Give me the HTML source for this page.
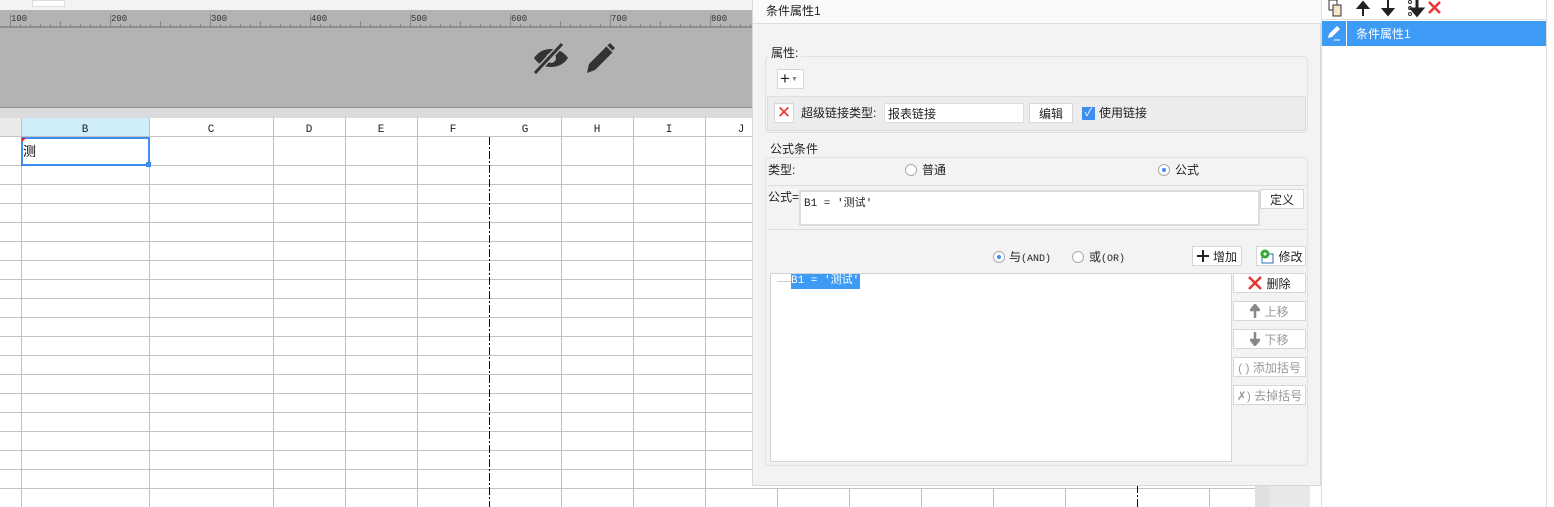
<!DOCTYPE html>
<html><head><meta charset="utf-8"><style>
*{margin:0;padding:0;box-sizing:border-box}
body{width:1554px;height:507px;position:relative;overflow:hidden;background:#fff;font-family:"Liberation Sans","Noto Sans CJK SC",sans-serif;font-size:12px;color:#222}
.a{position:absolute}
.btn{position:absolute;background:#fff;border:1px solid #d6d6d6;font-size:12px;display:flex;align-items:center;justify-content:center;gap:4px}
.dis{color:#999}
.radio{position:absolute;width:12px;height:12px;border:1px solid #aaa;border-radius:50%;background:#fff}
.radio.on::after{content:"";position:absolute;left:3px;top:3px;width:4px;height:4px;border-radius:50%;background:#3d8ef0}
</style></head><body>
<!-- toolbar -->
<div class="a" style="left:0;top:0;width:752px;height:10px;background:#f3f3f3"></div>
<div class="a" style="left:32px;top:0;width:33px;height:7px;background:#fff;border:1px solid #ddd"></div>
<!-- ruler -->
<div class="a" style="left:0;top:10px;width:752px;height:18px;background:#b3b3b3;border-bottom:2px solid #8e8e8e"></div>
<svg class="a" style="left:0;top:10px" width="752" height="18">
<g stroke="#888" stroke-width="1">
<path d="M10.5 4v14M110.5 4v14M210.5 4v14M310.5 4v14M410.5 4v14M510.5 4v14M610.5 4v14M710.5 4v14"/>
<path d="M20.5 14v4M30.5 14v4M40.5 14v4M50.5 14v4M60.5 11v7M70.5 14v4M80.5 14v4M90.5 14v4M100.5 14v4M120.5 14v4M130.5 14v4M140.5 14v4M150.5 14v4M160.5 11v7M170.5 14v4M180.5 14v4M190.5 14v4M200.5 14v4M220.5 14v4M230.5 14v4M240.5 14v4M250.5 14v4M260.5 11v7M270.5 14v4M280.5 14v4M290.5 14v4M300.5 14v4M320.5 14v4M330.5 14v4M340.5 14v4M350.5 14v4M360.5 11v7M370.5 14v4M380.5 14v4M390.5 14v4M400.5 14v4M420.5 14v4M430.5 14v4M440.5 14v4M450.5 14v4M460.5 11v7M470.5 14v4M480.5 14v4M490.5 14v4M500.5 14v4M520.5 14v4M530.5 14v4M540.5 14v4M550.5 14v4M560.5 11v7M570.5 14v4M580.5 14v4M590.5 14v4M600.5 14v4M620.5 14v4M630.5 14v4M640.5 14v4M650.5 14v4M660.5 11v7M670.5 14v4M680.5 14v4M690.5 14v4M700.5 14v4M720.5 14v4M730.5 14v4M740.5 14v4M750.5 14v4"/></g>
<g font-family="Liberation Mono" font-size="9" fill="#333"><text x="11" y="11">100</text><text x="111" y="11">200</text><text x="211" y="11">300</text><text x="311" y="11">400</text><text x="411" y="11">500</text><text x="511" y="11">600</text><text x="611" y="11">700</text><text x="711" y="11">800</text></g></svg>
<!-- gray area -->
<div class="a" style="left:0;top:28px;width:752px;height:80px;background:#b3b3b3;border-bottom:1px solid #8e8e8e"></div>
<svg class="a" style="left:530px;top:40px" width="90" height="38">
<path d="M4 18c4-6 10-9 17-9s13 3 17 9c-4 6-10 9-17 9S8 24 4 18z" fill="#333"/>
<circle cx="21" cy="18" r="5" fill="#b3b3b3"/>
<path d="M5 33L32 4" stroke="#b3b3b3" stroke-width="6"/>
<path d="M5 33L32 4" stroke="#333" stroke-width="3"/>
<path d="M57 33l2-9 18-18 6 6-18 18z" fill="#333"/>
<path d="M75 8l5-5 5 5-5 5z" fill="#333"/>
<path d="M77 6l6 6" stroke="#b3b3b3" stroke-width="1.5"/>
</svg>
<div class="a" style="left:0;top:108px;width:752px;height:10px;background:#dcdcde"></div>
<!-- grid -->
<svg class="a" style="left:0;top:118px" width="1270" height="389">
<rect x="0" y="0" width="21" height="19" fill="#eaeaea"/>
<rect x="21" y="0" width="128" height="19" fill="#cfeefa"/>
<g stroke="#c2c2c2" stroke-width="1">
<path d="M0 18.5H752M0 47.5H752M0 66.5H752M0 85.5H752M0 104.5H752M0 123.5H752M0 142.5H752M0 161.5H752M0 180.5H752M0 199.5H752M0 218.5H752M0 237.5H752M0 256.5H752M0 275.5H752M0 294.5H752M0 313.5H752M0 332.5H752M0 351.5H752M0 370.5H1255"/>
<path d="M21.5 0v389M149.5 0v389M273.5 0v389M345.5 0v389M417.5 0v389M561.5 0v389M633.5 0v389M705.5 0v389M777.5 370v19M849.5 370v19M921.5 370v19M993.5 370v19M1065.5 370v19M1209.5 370v19"/>
</g>
<path d="M489.5 19v370M1137.5 367v22" stroke="#000" stroke-dasharray="8 2 2 2"/>
<g font-family="Liberation Mono" font-size="11" fill="#222" text-anchor="middle"><text x="85" y="14">B</text><text x="211" y="14">C</text><text x="309" y="14">D</text><text x="381" y="14">E</text><text x="453" y="14">F</text><text x="525" y="14">G</text><text x="597" y="14">H</text><text x="669" y="14">I</text><text x="741" y="14">J</text></g>
<rect x="22" y="20" width="127" height="27" fill="none" stroke="#3d8ef0" stroke-width="2"/>
<rect x="146" y="44" width="5" height="5" fill="#3d8ef0"/>
<path d="M22 20h4l-4 4z" fill="#e22"/>
<text x="23" y="38" font-size="13" font-family="Noto Sans CJK SC">测</text>
<rect x="1255" y="367" width="15" height="22" fill="#e0e0e0"/>
</svg>
<div class="a" style="left:1270px;top:485px;width:40px;height:22px;background:#e8e8e8"></div>
<!-- dialog -->
<div class="a" style="left:752px;top:0;width:569px;height:486px;background:#f3f3f5;border:1px solid #d8d8d8;border-top:none"></div>
<div class="a" style="left:753px;top:0;width:568px;height:24px;background:#fafafa;border-bottom:1px solid #ddd;padding:2px 0 0 13px;font-size:12px">条件属性1</div>
<div class="a" style="left:765px;top:56px;width:543px;height:77px;border:1px solid #e2e2e4;border-radius:4px"></div>
<div class="a" style="left:768px;top:44px;background:#f3f3f5;padding:0 3px;font-size:12px">属性:</div>
<div class="btn" style="left:777px;top:69px;width:27px;height:20px;font-size:17px;justify-content:flex-start;padding-left:2px">+<span style="font-size:7px;color:#888;margin-left:-3px">▼</span></div>
<div class="a" style="left:767px;top:96px;width:539px;height:35px;background:#ececee;border:1px solid #ddd"></div>
<div class="btn" style="left:774px;top:103px;width:20px;height:20px;color:#e33;font-size:17px">✕</div>
<div class="a" style="left:801px;top:104px;font-size:12px">超级链接类型:</div>
<div class="a" style="left:884px;top:103px;width:140px;height:20px;background:#fff;border:1px solid #ddd;padding:1px 3px">报表链接</div>
<div class="btn" style="left:1029px;top:103px;width:44px;height:20px">编辑</div>
<div class="a" style="left:1082px;top:107px;width:13px;height:13px;background:#3d8ef0;color:#fff;font-size:11px;line-height:13px;text-align:center">✓</div>
<div class="a" style="left:1099px;top:104px">使用链接</div>
<div class="a" style="left:765px;top:157px;width:543px;height:309px;border:1px solid #e2e2e4;border-radius:4px"></div>
<div class="a" style="left:768px;top:140px;background:#f3f3f5;padding:0 2px">公式条件</div>
<div class="a" style="left:768px;top:161px">类型:</div>
<div class="radio" style="left:905px;top:164px"></div><div class="a" style="left:922px;top:161px">普通</div>
<div class="radio on" style="left:1158px;top:164px"></div><div class="a" style="left:1175px;top:161px">公式</div>
<div class="a" style="left:768px;top:185px;width:538px;height:1px;background:#ddd"></div>
<div class="a" style="left:768px;top:188px">公式=</div>
<div class="a" style="left:799px;top:190px;width:461px;height:36px;background:#fff;border:2px solid #ddd;padding:2px 3px;font-family:'Liberation Mono','Noto Sans CJK SC',monospace;font-size:11px">B1 = '测试'</div>
<div class="btn" style="left:1260px;top:189px;width:44px;height:20px">定义</div>
<div class="a" style="left:768px;top:229px;width:538px;height:1px;background:#ddd"></div>
<div class="radio on" style="left:993px;top:251px"></div><div class="a" style="left:1009px;top:248px">与<span style="font-size:10px;font-family:'Liberation Mono'">(AND)</span></div>
<div class="radio" style="left:1072px;top:251px"></div><div class="a" style="left:1089px;top:248px">或<span style="font-size:10px;font-family:'Liberation Mono'">(OR)</span></div>
<div class="btn" style="left:1192px;top:246px;width:50px;height:20px"><svg width="12" height="12"><path d="M6 0v12M0 6h12" stroke="#222" stroke-width="2"/></svg>增加</div>
<div class="btn" style="left:1256px;top:246px;width:50px;height:20px"><svg width="15" height="15"><rect x="3" y="5" width="11" height="9" fill="#fff" stroke="#2a6ebd"/><circle cx="6" cy="5" r="4.5" fill="#3a3"/><circle cx="6" cy="5" r="1.5" fill="#fff"/></svg>修改</div>
<div class="a" style="left:770px;top:273px;width:462px;height:189px;background:#fff;border:1px solid #d4d4d4"></div>
<div class="a" style="left:777px;top:281px;width:14px;height:1px;background:#ccc"></div>
<div class="a" style="left:791px;top:274px;width:69px;height:15px;background:#3d9bf5;color:#fff;font-family:'Liberation Mono','Noto Sans CJK SC',monospace;font-size:11px;line-height:15px">B1 = '测试'</div>
<div class="btn" style="left:1233px;top:273px;width:73px;height:20px"><svg width="14" height="14"><path d="M1 1l12 12M13 1L1 13" stroke="#e33" stroke-width="2.5"/></svg>删除</div>
<div class="btn dis" style="left:1233px;top:301px;width:73px;height:20px"><svg width="10" height="14"><path d="M5 14V4M1 6l4-5 4 5z" stroke="#888" stroke-width="2.5" fill="#888"/></svg>上移</div>
<div class="btn dis" style="left:1233px;top:329px;width:73px;height:20px"><svg width="10" height="14"><path d="M5 0v10M1 8l4 5 4-5z" stroke="#888" stroke-width="2.5" fill="#888"/></svg>下移</div>
<div class="btn dis" style="left:1233px;top:357px;width:73px;height:20px">( ) 添加括号</div>
<div class="btn dis" style="left:1233px;top:385px;width:73px;height:20px">✗) 去掉括号</div>
<!-- right panel -->
<div class="a" style="left:1321px;top:0;width:1px;height:507px;background:#ddd"></div>
<div class="a" style="left:1546px;top:0;width:1px;height:507px;background:#ddd"></div>
<div class="a" style="left:1322px;top:19px;width:224px;height:1px;background:#ddd"></div>
<svg class="a" style="left:1326px;top:0" width="124" height="18">
<rect x="3" y="0" width="8" height="10" fill="#fff" stroke="#333"/><rect x="7" y="5" width="8" height="11" fill="#f5e6c8" stroke="#333"/>
<path d="M37 16V4M32 8l5-6 5 6z" stroke="#222" stroke-width="2" fill="#222"/>
<path d="M62 0v12M57 9l5 6 5-6z" stroke="#222" stroke-width="2" fill="#222"/>
<circle cx="84" cy="2" r="1.5" fill="none" stroke="#333"/><circle cx="84" cy="8" r="1.5" fill="none" stroke="#333"/><circle cx="84" cy="14" r="1.5" fill="none" stroke="#333"/>
<path d="M91 0v12M86 9l5 6 5-6z" stroke="#222" stroke-width="3" fill="#222"/>
<path d="M103 2l11 11M114 2L103 13" stroke="#e33" stroke-width="2.5"/>
</svg>
<div class="a" style="left:1322px;top:21px;width:224px;height:25px;background:#3d9bf5"></div>
<div class="a" style="left:1346px;top:21px;width:1px;height:25px;background:#fff"></div>
<svg class="a" style="left:1326px;top:25px" width="18" height="18"><path d="M2 13l1-4 8-8 3 3-8 8z" fill="#fff"/><path d="M8 15h6" stroke="#fff"/></svg>
<div class="a" style="left:1356px;top:25px;color:#fff">条件属性1</div>
</body></html>
